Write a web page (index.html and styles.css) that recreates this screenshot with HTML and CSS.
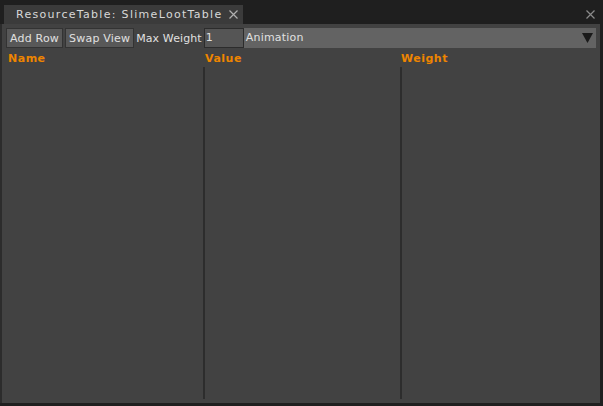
FILE: index.html
```html
<!DOCTYPE html>
<html>
<head>
<meta charset="utf-8">
<link rel="stylesheet" href="styles.css">
</head>
<body>
<div class="window">
  <div class="tabbar">
    <div class="tab">
      <span class="tab-title">ResourceTable: SlimeLootTable</span>
      <span class="close">
        <svg width="9" height="9" viewBox="0 0 9 9"><path d="M0.5 0.5 L8.5 8.5 M8.5 0.5 L0.5 8.5" stroke="#b0b0b0" stroke-width="1.2" fill="none"/></svg>
      </span>
    </div>
    <span class="close win-close">
      <svg width="9" height="9" viewBox="0 0 9 9"><path d="M0.5 0.5 L8.5 8.5 M8.5 0.5 L0.5 8.5" stroke="#8a8a8a" stroke-width="1.2" fill="none"/></svg>
    </span>
  </div>
  <div class="panel">
    <div class="toolbar">
      <button class="btn">Add Row</button>
      <button class="btn">Swap View</button>
      <span class="label">Max Weight</span>
      <div class="input">1</div>
      <div class="select">
        <span>Animation</span>
        <svg width="11" height="10" viewBox="0 0 11 10"><path d="M0 0 H11 L5.5 10 Z" fill="#1a1a1a"/></svg>
      </div>
    </div>
    <div class="table">
      <div class="col first">
        <div class="head">Name</div>
        <div class="body"></div>
      </div>
      <div class="col second">
        <div class="head">Value</div>
        <div class="body sep"></div>
      </div>
      <div class="col third">
        <div class="head">Weight</div>
        <div class="body sep"></div>
      </div>
    </div>
  </div>
</div>
</body>
</html>
```

FILE: styles.css
```css
html, body {
  margin: 0;
  padding: 0;
  background: #1f1f1f;
  width: 603px;
  height: 406px;
  overflow: hidden;
  font-family: "DejaVu Sans", sans-serif;
  font-size: 11px;
  color: #e0e0e0;
}

.window {
  display: flex;
  flex-direction: column;
  height: 406px;
}

.tabbar {
  height: 24px;
  display: flex;
  align-items: flex-end;
}

.tab {
  margin-left: 4px;
  width: 239px;
  height: 19px;
  background: #3b3b3b;
  display: flex;
  align-items: center;
  justify-content: space-between;
  padding: 0 5px 0 12px;
  box-sizing: border-box;
}

.tab-title {
  color: #d8d8d8;
  font-size: 11px;
  letter-spacing: 1.3px;
}

.close {
  display: flex;
  align-items: center;
}

.win-close {
  margin-left: auto;
  margin-right: 8px;
  align-self: center;
  margin-top: 5px;
}

.panel {
  margin-right: 3px;
  height: 379px;
  background: #424242;
  border-left: 2px solid #2c2c2c;
  display: flex;
  flex-direction: column;
  box-sizing: border-box;
}

.toolbar {
  display: flex;
  align-items: center;
  padding: 4px 4px 0 4px;
  gap: 2px;
  height: 20px;
  letter-spacing: 0.2px;
}

.btn {
  font-family: "DejaVu Sans", sans-serif;
  font-size: 11px;
  letter-spacing: 0.2px;
  color: #e0e0e0;
  background: #585858;
  border: 1px solid #333;
  height: 20px;
  padding: 0 3px;
  margin: 0;
}

.label {
  color: #e0e0e0;
  letter-spacing: 0.1px;
  padding: 0;
}

.input {
  width: 40px;
  height: 20px;
  box-sizing: border-box;
  background: #555;
  border: 1px solid #2c2c2c;
  padding: 2px 1px;
  line-height: 14px;
}

.select {
  flex: 1;
  height: 20px;
  box-sizing: border-box;
  background: #636363;
  display: flex;
  align-items: center;
  justify-content: space-between;
  padding: 0 3px 0 2px;
  margin-left: -2px;
  line-height: 14px;
}

.table {
  flex: 1;
  display: grid;
  grid-template-columns: 201px 197px 1fr;
  margin-top: 2px;
}

.col {
  display: flex;
  flex-direction: column;
}

.head {
  color: #ee8500;
  font-weight: bold;
  font-size: 11px;
  letter-spacing: 0.5px;
  height: 17px;
  line-height: 17px;
}

.first .head {
  padding-left: 6px;
}

.second .head {
  padding-left: 2px;
}

.third .head {
  padding-left: 1px;
}

.body {
  flex: 1;
  margin-bottom: 4px;
}

.body.sep {
  border-left: 2px solid #2d2d2d;
}
```
